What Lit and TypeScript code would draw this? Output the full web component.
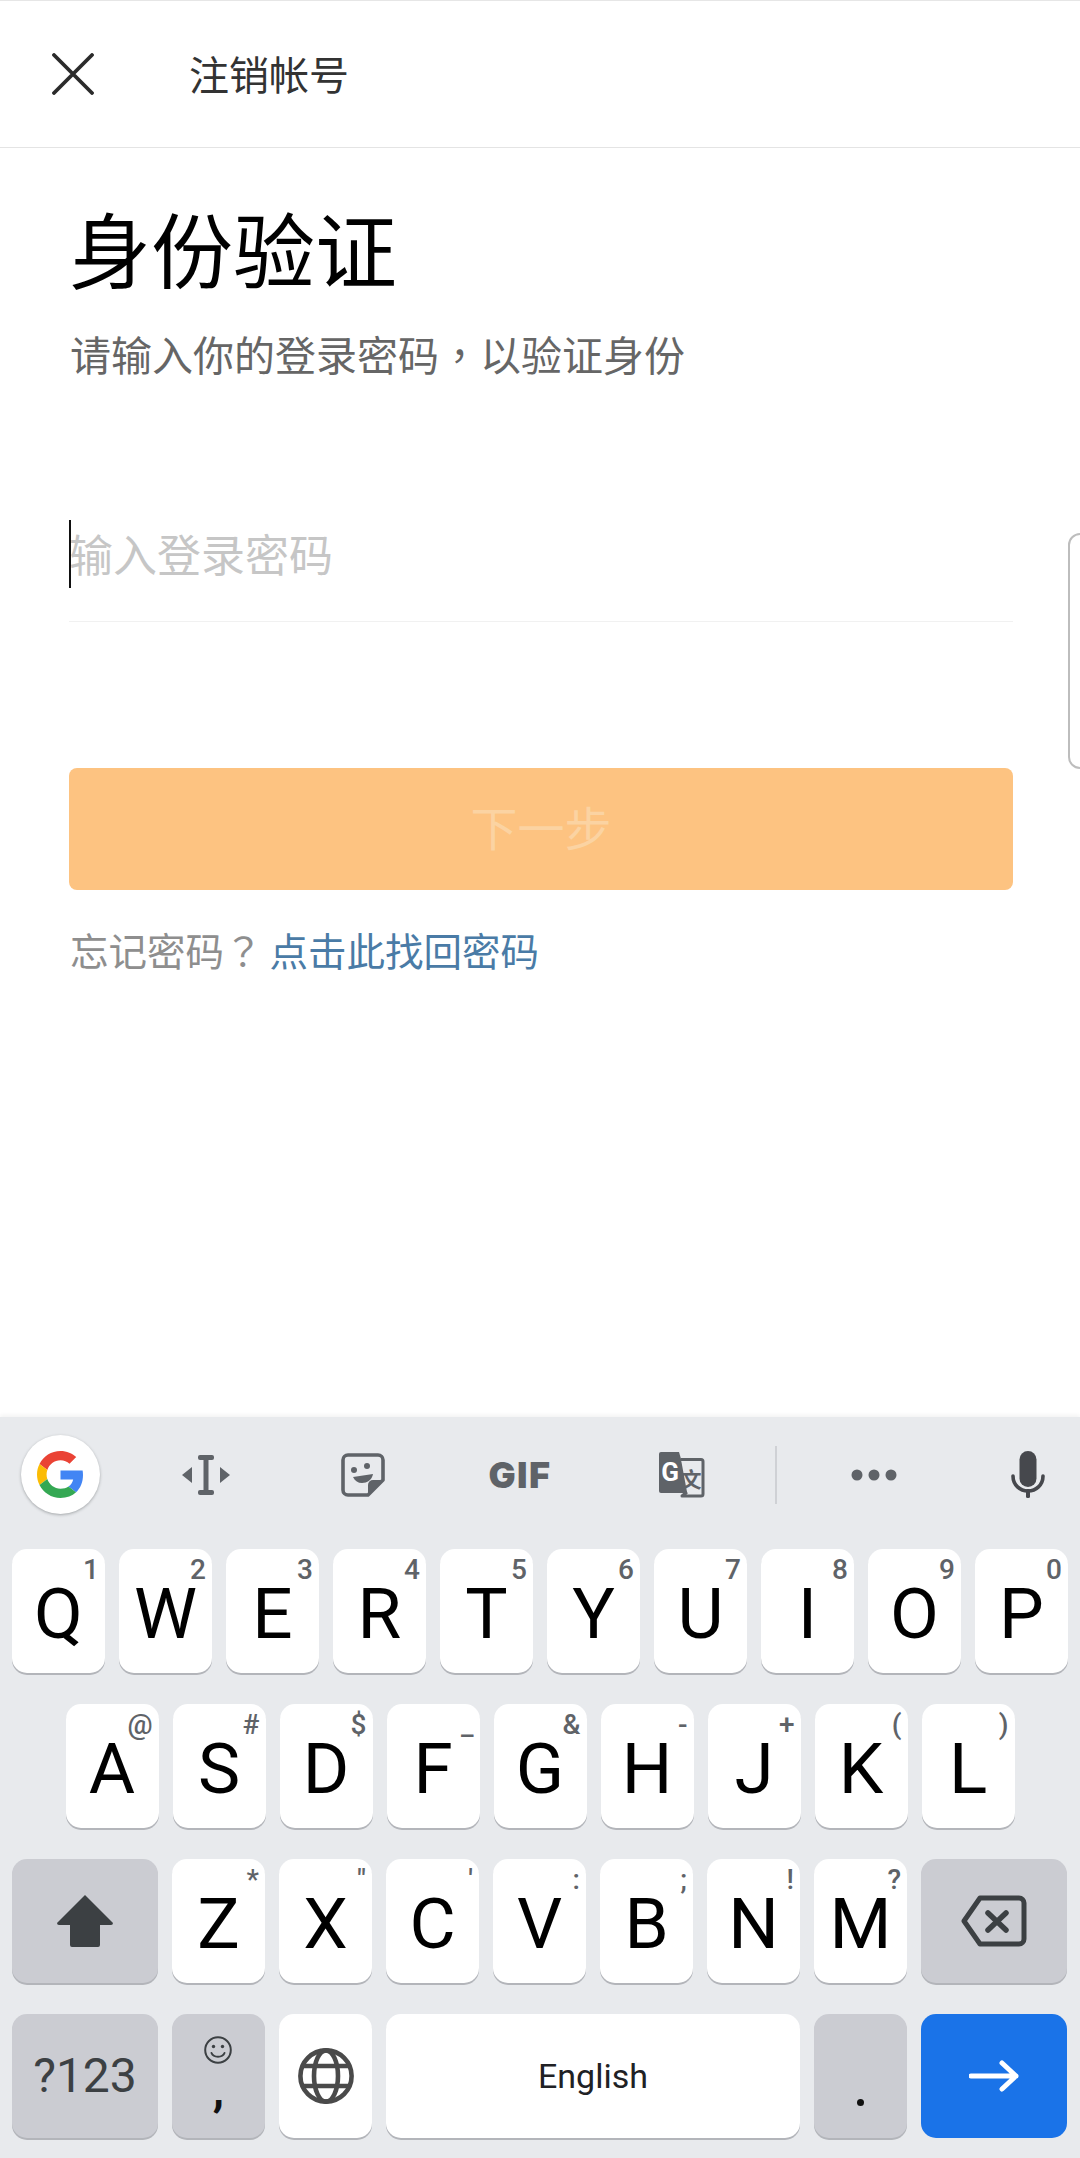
import { LitElement, html, css } from "lit";
import { customElement } from "lit/decorators.js";

const ROW1: [string, string][] = [["Q","1"],["W","2"],["E","3"],["R","4"],["T","5"],["Y","6"],["U","7"],["I","8"],["O","9"],["P","0"]];
const ROW2: [string, string][] = [["A","@"],["S","#"],["D","$"],["F","_"],["G","&"],["H","-"],["J","+"],["K","("],["L",")"]];
const ROW3: [string, string][] = [["Z","*"],["X","\""],["C","'"],["V",":"],["B",";"],["N","!"],["M","?"]];

@customElement("app-root")
export class AppRoot extends LitElement {
  static styles = css`
    :host { display: block; width: 1080px; height: 2158px; background: #fff; position: relative; overflow: hidden;
      font-family: "Noto Sans CJK SC", "Noto Sans", sans-serif; }
    .page { display: flex; flex-direction: column; height: 2158px; }
    .nav { height: 146px; border-top: 1px solid #e6e6e6; border-bottom: 1px solid #e4e4e4; display: flex; align-items: center; flex: none; box-sizing: content-box; }
    .close { width: 42px; height: 42px; margin-left: 52px; flex: none; display: block; }
    .nav-title { margin-left: 95px; padding-bottom: 2px; font-size: 40px; color: #333; line-height: 60px; }
    .main { flex: 1; padding: 49px 67px 0 69px; display: flex; flex-direction: column; }
    .title { font-size: 82px; line-height: 100px; color: #000; }
    .sub { font-size: 41px; line-height: 60px; color: #666; margin-top: 26px; margin-left: 1px; }
    .tc { font-family: "Noto Sans CJK TC", sans-serif; }
    .field { margin-top: 111px; height: 128px; padding-bottom: 10px; box-sizing: border-box; border-bottom: 1px solid #f1f1f1; display: flex; align-items: center; position: relative; }
    .caret { position: absolute; left: 0; top: 26px; width: 2px; height: 68px; background: #111; }
    .ph { font-size: 44px; line-height: 60px; color: #c6c6c6; }
    .next { margin-top: 146px; height: 122px; padding-bottom: 8px; box-sizing: border-box; border-radius: 8px; background: #fdc381; color: #fbd3a2; font-size: 47px;
      display: flex; align-items: center; justify-content: center; }
    .forgot { margin-top: 34px; font-size: 38.5px; line-height: 50px; color: #8e8e8e; margin-left: 1px; }
    .link { color: #4a7ba6; margin-left: 7px; }
    .handle { position: absolute; right: -14px; top: 533px; width: 22px; height: 232px; border: 2px solid #bdbdbd; border-radius: 12px; background: #fff; }

    .kb { flex: none; height: 741px; background: #e8eaed; box-shadow: 0 -2px 4px rgba(0,0,0,.05); display: flex; flex-direction: column; font-family: Roboto, sans-serif; }
    .tools { height: 132px; padding-bottom: 17px; box-sizing: border-box; display: flex; align-items: center; flex: none; color: #5f6368; }
    .slot { display: flex; align-items: center; justify-content: center; flex: none; height: 100px; }
    .s1 { width: 120px; } .s2 { width: 172px; } .s3 { width: 142px; } .s4 { width: 172px; } .s5 { width: 152px; }
    .s6 { width: 36px; } .s7 { width: 160px; } .s8 { width: 126px; padding-left: 22px; box-sizing: border-box; }
    .g { width: 79px; height: 79px; border-radius: 50%; background: #fff; display: flex; align-items: center; justify-content: center; box-shadow: 0 1px 3px rgba(60,64,67,.4); }
    .gif { font: 900 36px/1 Inter, sans-serif; letter-spacing: 1.5px; color: #5f6368; }
    .div { width: 2px; height: 58px; background: #cfd1d5; }
    .row { display: flex; gap: 14px; height: 124px; margin-bottom: 31px; justify-content: center; flex: none; }
    .row.full { padding: 0 12px; justify-content: flex-start; }
    .key { width: 93px; height: 124px; box-sizing: border-box; flex: none; background: #fff; border-radius: 15px; box-shadow: 0 2px 0 #b3b5ba; display: flex; align-items: center; justify-content: center; position: relative; color: #000; font-size: 71px; line-height: 1; }
    .ltr { padding-top: 5px; }
    .fn { background: #cbccd2; }
    .wide { width: 146px; }
    .space { width: 414px; font-size: 34px; color: #202124; }
    .go { background: #1a73e8; box-shadow: none; }
    .hint { position: absolute; top: 7px; right: 6px; font-size: 28px; line-height: 28px; font-weight: 500; color: #5f6368; }
    .sym { font-size: 48px; font-weight: 400; color: #3c4043; }
    .comma { position: absolute; left: 0; right: 0; top: 53px; text-align: center; font-size: 46px; font-weight: 700; line-height: 1; color: #111; }
    .smile { position: absolute; left: 32px; top: 22px; display: block; }
    .dot { position: absolute; left: 43px; top: 85px; width: 7px; height: 7px; border-radius: 50%; background: #111; }
  `;

  private key(l: string, h: string) {
    return html`<div class="key ltr">${l}<span class="hint">${h}</span></div>`;
  }

  render() {
    return html`
      <div class="page">
        <div class="nav">
          <svg class="close" viewBox="0 0 42 42"><path d="M2 2 L40 40 M40 2 L2 40" stroke="#2b2b2b" stroke-width="3.8" stroke-linecap="round" fill="none"/></svg>
          <div class="nav-title">注销帐号</div>
        </div>
        <div class="main">
          <div class="title">身份验证</div>
          <div class="sub">请输入你的登录密码<span class="tc">，</span>以验证身份</div>
          <div class="field"><i class="caret"></i><div class="ph">输入登录密码</div></div>
          <div class="next">下一步</div>
          <div class="forgot">忘记密码<span class="tc">？</span><span class="link">点击此找回密码</span></div>
        </div>
        <div class="kb">
          <div class="tools">
            <div class="slot s1"><div class="g">
              <svg width="47" height="47" viewBox="0 0 48 48">
                <path fill="#EA4335" d="M24 9.5c3.54 0 6.71 1.22 9.21 3.6l6.85-6.85C35.9 2.38 30.47 0 24 0 14.62 0 6.51 5.38 2.56 13.22l7.98 6.19C12.43 13.72 17.74 9.5 24 9.5z"/>
                <path fill="#4285F4" d="M46.98 24.55c0-1.57-.15-3.09-.38-4.55H24v9.02h12.94c-.58 2.96-2.26 5.48-4.78 7.18l7.73 6c4.51-4.18 7.09-10.36 7.09-17.65z"/>
                <path fill="#FBBC05" d="M10.53 28.59c-.48-1.45-.76-2.99-.76-4.59s.27-3.14.76-4.59l-7.98-6.19C.92 16.46 0 20.12 0 24c0 3.88.92 7.54 2.56 10.78l7.97-6.19z"/>
                <path fill="#34A853" d="M24 48c6.48 0 11.93-2.13 15.89-5.81l-7.73-6c-2.15 1.45-4.92 2.3-8.16 2.3-6.26 0-11.57-4.22-13.47-9.91l-7.98 6.19C6.51 42.62 14.62 48 24 48z"/>
              </svg></div></div>
            <div class="slot s2">
              <svg width="48" height="40" viewBox="0 0 48 40" fill="#5f6368">
                <rect x="16" y="0" width="16" height="5" rx="2"/><rect x="21.5" y="2" width="5" height="36"/><rect x="16" y="35" width="16" height="5" rx="2"/>
                <path d="M10 12 V28 L0 20 Z M38 12 V28 L48 20 Z"/>
              </svg></div>
            <div class="slot s3">
              <svg width="44" height="44" viewBox="0 0 44 44">
                <path d="M7 2 H37 a5 5 0 0 1 5 5 V27 L27 42 H7 a5 5 0 0 1 -5 -5 V7 a5 5 0 0 1 5 -5 z" fill="none" stroke="#5f6368" stroke-width="3.6" stroke-linejoin="round"/>
                <path d="M42 27 H32 a5 5 0 0 0 -5 5 V42 Z" fill="#5f6368"/>
                <circle cx="13" cy="17" r="3" fill="#5f6368"/><circle cx="26" cy="13" r="3" fill="#5f6368"/>
                <path d="M12 24 L32 21 C31 27 26 30 21 30 C17 30 14 28 12 24 Z" fill="#5f6368"/>
              </svg></div>
            <div class="slot s4"><span class="gif">GIF</span></div>
            <div class="slot s5">
              <svg width="46" height="46" viewBox="0 0 46 46">
                <path d="M2 0 H20 L32 41 H2 a2 2 0 0 1 -2 -2 V2 a2 2 0 0 1 2 -2 Z" fill="#5f6368"/>
                <path d="M22 7.5 H42 a2 2 0 0 1 2 2 V42 a2 2 0 0 1 -2 2 H23 L28 40" fill="#e8eaed" stroke="#5f6368" stroke-width="3" stroke-linejoin="round"/>
                <text x="11" y="29" font-family="Roboto, sans-serif" font-weight="700" font-size="26" text-anchor="middle" fill="#fff">G</text>
                <text x="32" y="35" font-family="'Noto Sans CJK SC', sans-serif" font-weight="700" font-size="21" text-anchor="middle" fill="#5f6368">文</text>
              </svg></div>
            <div class="slot s6"><div class="div"></div></div>
            <div class="slot s7">
              <svg width="46" height="12" viewBox="0 0 46 12" fill="#5f6368"><circle cx="6" cy="6" r="5.5"/><circle cx="23" cy="6" r="5.5"/><circle cx="40" cy="6" r="5.5"/></svg></div>
            <div class="slot s8">
              <svg width="34" height="47" viewBox="0 0 34 47" fill="#46484d">
                <rect x="8.5" y="0" width="17" height="36" rx="8.5"/>
                <path d="M2 25 C2 34 9 40 17 40 C25 40 32 34 32 25" fill="none" stroke="#46484d" stroke-width="3.6" stroke-linecap="round"/>
                <rect x="15" y="38" width="4" height="9" rx="1.5"/>
              </svg></div>
          </div>

          <div class="row full">${ROW1.map(([l, h]) => this.key(l, h))}</div>
          <div class="row">${ROW2.map(([l, h]) => this.key(l, h))}</div>
          <div class="row full">
            <div class="key fn wide">
              <svg width="56" height="52" viewBox="0 0 56 52"><path d="M28 0 L56 28 Q56 30 54 30 H43 V50 Q43 52 41 52 H15 Q13 52 13 50 V30 H2 Q0 30 0 28 Z" fill="#3c4043"/></svg>
            </div>
            ${ROW3.map(([l, h]) => this.key(l, h))}
            <div class="key fn wide">
              <svg width="66" height="52" viewBox="0 0 66 52" fill="none" stroke="#3c4043" stroke-width="5" stroke-linejoin="round" stroke-linecap="round">
                <path d="M19 3 H58 a5 5 0 0 1 5 5 V44 a5 5 0 0 1 -5 5 H19 L3 26 Z"/>
                <path d="M27 18 L45 35 M45 18 L27 35" stroke-width="5.5"/>
              </svg>
            </div>
          </div>
          <div class="row full">
            <div class="key fn wide sym">?123</div>
            <div class="key fn">
              <svg class="smile" width="28" height="28" viewBox="0 0 28 28" fill="none" stroke="#3c4043" stroke-width="2">
                <circle cx="14" cy="14" r="12.8"/><path d="M7.5 17 C9.5 22 18.5 22 20.5 17" stroke-linecap="round"/>
                <circle cx="9.5" cy="10.5" r="1.7" fill="#3c4043" stroke="none"/><circle cx="18.5" cy="10.5" r="1.7" fill="#3c4043" stroke="none"/>
              </svg>
              <span class="comma">,</span>
            </div>
            <div class="key">
              <svg width="56" height="56" viewBox="0 0 56 56" fill="none" stroke="#4a4a4a" stroke-width="4.6">
                <circle cx="28" cy="28" r="25.6"/><ellipse cx="28" cy="28" rx="12" ry="25.6"/>
                <path d="M5 18 H51 M5 38 H51"/>
              </svg>
            </div>
            <div class="key space">English</div>
            <div class="key fn"><i class="dot"></i></div>
            <div class="key go wide">
              <svg width="50" height="32" viewBox="0 0 50 32" fill="none" stroke="#fff" stroke-width="5" stroke-linecap="round" stroke-linejoin="round">
                <path d="M2 16 H47 M33 3 L47 16 L33 29"/>
              </svg>
            </div>
          </div>
        </div>
      </div>
      <div class="handle"></div>
    `;
  }
}
